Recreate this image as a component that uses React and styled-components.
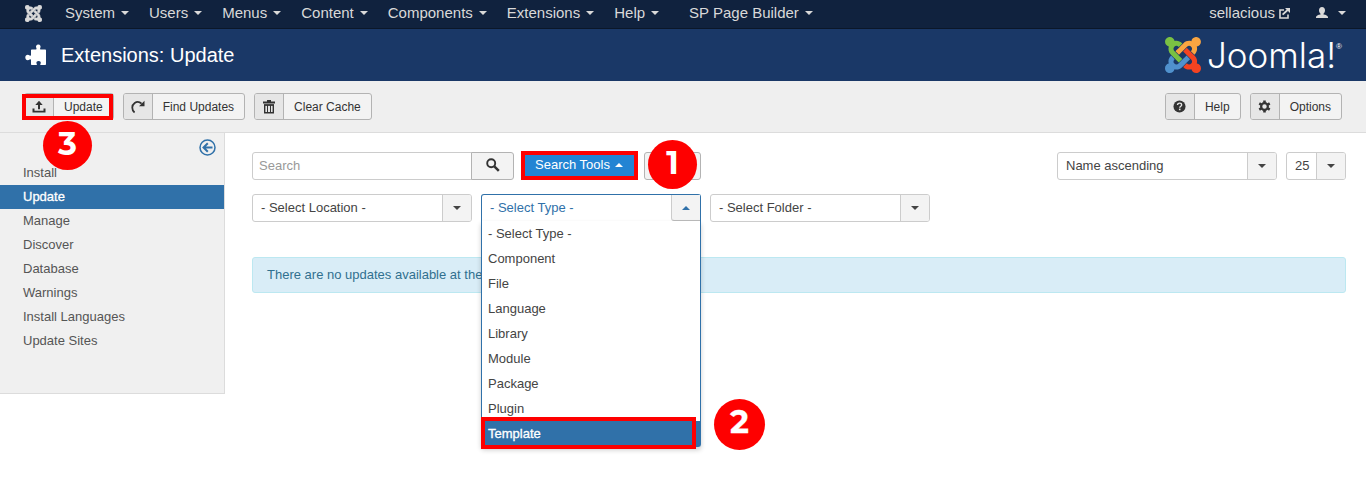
import React from "react";
import styled, { createGlobalStyle, css } from "styled-components";

const GlobalStyle = createGlobalStyle`
  *, *::before, *::after { box-sizing: border-box; }
  body {
    margin: 0;
    background: #fff;
    color: #333;
    font: 13px/18px "Liberation Sans", Arial, sans-serif;
  }
  button, input, select { font: inherit; color: inherit; margin: 0; }
  a { color: inherit; text-decoration: none; }
  ul { list-style: none; margin: 0; padding: 0; }
  svg { display: block; flex: none; }
`;

const Page = styled.div`
  min-height: 100vh;
`;

/* ---------- shared pieces ---------- */

const Caret = styled.span`
  width: 0;
  height: 0;
  flex: none;
  border: 4px solid transparent;
  ${(p) =>
    p.$up
      ? css`border-top-width: 0; border-bottom-color: currentColor;`
      : css`border-bottom-width: 0; border-top-color: currentColor;`}
`;

const Highlight = styled.span`
  position: absolute;
  inset: ${(p) => p.$inset || "0"};
  border: 4px solid #fe0000;
  pointer-events: none;
`;

const Step = styled.span`
  position: absolute;
  z-index: 5;
  top: ${(p) => p.$top}px;
  left: ${(p) => p.$left}px;
  width: ${(p) => p.$size}px;
  height: ${(p) => p.$size}px;
  border-radius: 50%;
  background: #fe0000;
  color: #fff;
  font: 700 32px/46px Montserrat, Inter, sans-serif;
  text-align: center;
  pointer-events: none;
`;

/* ---------- top navigation ---------- */

const NavBar = styled.nav`
  display: flex;
  align-items: center;
  justify-content: space-between;
  height: 29px;
  padding: 0 20px 2px 25px;
  background: #10223e;
  border-bottom: 1px solid #0b1729;
  color: #d9d9d9;
  font-size: 15px;
`;

const NavGroup = styled.div`
  display: flex;
  align-items: center;
  gap: ${(p) => p.$gap}px;
`;

const NavLink = styled.a`
  display: flex;
  align-items: center;
  gap: ${(p) => p.$gap || 6}px;
  white-space: nowrap;
  margin-left: ${(p) => (p.$apart ? 10 : 0)}px;
`;

/* ---------- title bar ---------- */

const Header = styled.header`
  display: flex;
  align-items: center;
  justify-content: space-between;
  height: 52px;
  padding: 0 24px 0 25px;
  background: #1a3867;
  color: #fff;
`;

const Title = styled.h1`
  display: flex;
  align-items: center;
  gap: 14px;
  margin: 0;
  font-size: 20px;
  font-weight: 400;
  line-height: 24px;
`;

const Brand = styled.a`
  display: flex;
  align-items: center;
  gap: 6px;
`;

const WordMark = styled.span`
  display: flex;
  font: 300 35px/36px Inter, sans-serif;
  sup { font: 400 8px/12px "Liberation Sans", sans-serif; margin-top: 4px; }
`;

/* ---------- toolbar ---------- */

const Toolbar = styled.div`
  display: flex;
  justify-content: space-between;
  padding: 12px 24px;
  background: #efefef;
  border-bottom: 1px solid #dcdcdc;
`;

const ToolGroup = styled.div`
  display: flex;
  gap: 9px;
`;

const ToolSlot = styled.div`
  position: relative;
`;

const ToolButton = styled.button`
  display: flex;
  align-items: stretch;
  height: 27px;
  padding: 0;
  border: 1px solid #b3b3b3;
  border-radius: 3px;
  background: #f3f3f3;
  color: #333;
  font-size: 12px;
  line-height: 26px;
  overflow: hidden;
`;

const ToolIcon = styled.span`
  display: flex;
  align-items: center;
  justify-content: center;
  width: 29px;
  background: #e6e6e6;
  border-right: 1px solid #b3b3b3;
`;

const ToolLabel = styled.span`
  padding: 0 10px;
`;

/* ---------- body ---------- */

const Body = styled.div`
  display: flex;
  align-items: flex-start;
`;

const Sidebar = styled.aside`
  flex: 0 0 225px;
  background: #f0f0f0;
  border: solid #dcdcdc;
  border-width: 0 1px 1px 0;
  padding-bottom: 40px;
`;

const CollapseRow = styled.div`
  display: flex;
  justify-content: flex-end;
  padding: 6px 8px 5px;
`;

const CollapseButton = styled.button`
  padding: 0;
  border: 0;
  background: none;
  color: #3071a9;
`;

const SideLink = styled.a`
  display: block;
  padding: 0 23px;
  line-height: 24px;
  color: ${(p) => (p.$active ? "#fff" : "#555")};
  background: ${(p) => (p.$active ? "#3071a9" : "transparent")};
  -webkit-text-stroke: ${(p) => (p.$active ? "0.3px" : "0")};
`;

const Main = styled.main`
  flex: 1;
  min-width: 0;
  padding: 19px 20px 0 27px;
`;

const FilterBar = styled.div`
  display: flex;
  justify-content: space-between;
  margin-bottom: 14px;
`;

const Row = styled.div`
  display: flex;
  gap: ${(p) => p.$gap}px;
`;

const SearchBox = styled.div`
  display: flex;
`;

const SearchInput = styled.input`
  width: 220px;
  height: 28px;
  padding: 0 6px 2px;
  border: 1px solid #ccc;
  border-radius: 3px 0 0 3px;
  background: #fff;
  outline: 0;
  &::placeholder { color: #999; opacity: 1; }
`;

const Button = styled.button`
  position: relative;
  display: flex;
  align-items: center;
  justify-content: center;
  gap: 5px;
  width: ${(p) => p.$width}px;
  height: 28px;
  padding: 0 0 2px;
  border: 1px solid #b3b3b3;
  border-radius: 3px;
  background: #f3f3f3;
  ${(p) =>
    p.$attached &&
    css`margin-left: -1px; border-radius: 0 3px 3px 0;`}
  ${(p) =>
    p.$primary &&
    css`background: #2384d3; border-color: #2384d3; color: #fff; border-radius: 0;`}
`;

const SelectBox = styled.div`
  position: relative;
  display: flex;
  width: ${(p) => p.$width}px;
  height: 28px;
  border: 1px solid ${(p) => (p.$open ? "#3071a9" : "#ccc")};
  border-radius: 3px;
  background: #fff;
  color: ${(p) => (p.$open ? "#3071a9" : "#444")};
  ${(p) => p.$open && css`border-bottom-color: #fff; border-radius: 3px 3px 0 0;`}
`;

const Select = styled.select`
  flex: 1;
  min-width: 0;
  padding: 0 0 0 8px;
  border: 0;
  outline: 0;
  background: transparent;
  appearance: none;
`;

const SelectArrow = styled.span`
  display: flex;
  align-items: center;
  justify-content: center;
  width: 29px;
  background: #f3f3f3;
  border-left: 1px solid #ccc;
  border-radius: 0 2px 2px 0;
  pointer-events: none;
  ${(p) => p.$open && css`border-bottom: 1px solid #bbb; border-radius: 0 0 0 3px;`}
`;

const Menu = styled.ul`
  position: absolute;
  z-index: 3;
  top: 26px;
  left: -1px;
  right: -1px;
  border: 1px solid #3071a9;
  border-top: 0;
  border-radius: 0 0 3px 3px;
  background: #fff;
  box-shadow: 0 3px 5px rgba(0, 0, 0, 0.2);
  color: #444;
`;

const Option = styled.li`
  position: relative;
  padding: 0 6px;
  line-height: 25px;
  ${(p) => p.$selected && css`background: #3071a9; color: #fff; -webkit-text-stroke: 0.3px;`}
`;

const Notice = styled.p`
  margin: 35px 0 0;
  padding: 8px 14px;
  border: 1px solid #bce8f1;
  border-radius: 3px;
  background: #d9edf7;
  color: #31708f;
`;

/* ---------- icons ---------- */

const JOOMLA_ARMS = [
  ["#7ac143", "M.6 92.1C.6 58.8 27.4 32 60.4 32c30 0 54.5 21.9 59.2 50.2 32.6-7.6 67.1.6 96.5 30l-44.3 44.3c-20.5-20.5-42.6-16.3-55.4-3.5-14.3 14.3-14.3 37.9 0 52.2l99.5 99.5-44 44.3c-87.7-87.2-49.7-49.7-99.8-99.7-26.8-26.5-35-64.8-24.8-98.9C20.4 144.6.6 120.7.6 92.1z"],
  ["#f9a541", "M130.1 208.5l44.3 44.3c10-10 89.7-89.7 99.7-99.8 14.3-14.3 37.6-14.3 51.9 0 12.8 12.8 17 35-3.5 55.4l44 44.3c31.2-31.2 38.5-67.6 28.9-101.2 29.2-4.1 51.9-29.2 51.9-59.5 0-33.2-26.8-60.1-59.8-60.1-30.3 0-55.4 22.5-59.5 51.6-33.8-9.9-71.7-1.5-98.3 25.1-18.3 19.1-71.1 71.5-99.6 99.9z"],
  ["#f44321", "M396.4 360.7c8.2-32.7-.9-68.5-26.3-93.9-11.8-12.2 5 4.7-99.5-99.7l-44.3 44.3 99.7 99.7c14.3 14.3 14.3 37.6 0 51.9-12.8 12.8-35 17-55.4-3.5l-44 44.3c27.6 30.2 68 38.8 102.7 28 5.5 27.4 29.7 48.1 58.9 48.1 33 0 59.8-26.8 59.8-60.1 0-30.2-22.5-55-51.6-59.1z"],
  ["#5091cd", "M312.1 307.6l-44-44.3c-87 86.4-50.4 50.4-99.7 99.8-14.3 14.3-37.6 14.3-51.9 0-13.1-13.4-16.9-35.3 3.2-55.4l-44-44.3c-30.2 30.2-38 65.2-29.5 98.3-26.7 6-46.2 29.9-46.2 58.2C0 453.2 26.8 480 59.8 480c28.6 0 52.5-19.8 58.6-46.7 32.7 8.2 68.5-.6 94.2-26 32.1-32 12.2-12.4 99.5-99.7z"],
];

const JoomlaMark = ({ size, color }) => (
  <svg width={size} height={size} viewBox="0 32 448 448" aria-hidden="true">
    {JOOMLA_ARMS.map(([fill, d]) => (
      <path key={fill} fill={color || fill} stroke={color} strokeWidth={color ? 14 : 0} d={d} />
    ))}
  </svg>
);

const PuzzleIcon = () => (
  <svg width="22" height="22" viewBox="0 0 22 22" fill="currentColor" aria-hidden="true">
    <path d="M7 5.500h4c.7 0 .7-.7.400-1.200C10.400 2.300 11.300.5 13.300.5s2.900 1.800 1.900 3.800c-.3.500-.3 1.200.4 1.200H20c.600 0 1 .400 1 1V20c0 .600-.400 1-1 1h-4.200c-.700 0-.600-.600-.300-1.100.9-1.700-.2-2.900-1.900-2.900s-2.800 1.200-1.900 2.900c.3.500.4 1.100-.3 1.100H7c-.600 0-1-.400-1-1v-4c0-.8-.8-.9-1.300-.5C2.500 17.100.3 15.800.3 13.500s2.200-3.600 4.400-2c.5.400 1.300.300 1.300-.5V6.500c0-.600.400-1 1-1z" />
  </svg>
);

const UploadIcon = () => (
  <svg width="14" height="14" viewBox="0 0 14 14" fill="currentColor" aria-hidden="true">
    <path d="M7 .8l3.700 4.200H8v4.300H6V5H3.300zM.5 8.500h2v2.200h9V8.500h2v4H.5z" />
  </svg>
);

const RedoIcon = () => (
  <svg width="14" height="14" viewBox="0 0 14 14" aria-hidden="true">
    <path d="M3.600 12.500C.4 9.900.6 5 3.700 2.900c2.300-1.500 5-1 6.900.8" fill="none" stroke="currentColor" strokeWidth="1.800" />
    <path d="M13.500.8v5.400H8z" fill="currentColor" />
  </svg>
);

const TrashIcon = () => (
  <svg width="14" height="14" viewBox="0 0 14 14" aria-hidden="true">
    <path d="M1 2.500h12M5 1h4" stroke="currentColor" strokeWidth="2" />
    <path d="M2.700 5v7.700h8.600V5z" fill="none" stroke="currentColor" strokeWidth="1.400" />
    <path d="M2 5h10M5.500 5v7M8.500 5v7" stroke="currentColor" strokeWidth="1" />
  </svg>
);

const HelpIcon = () => (
  <svg width="13" height="13" viewBox="0 0 14 14" aria-hidden="true">
    <circle cx="7" cy="7" r="6.500" fill="currentColor" />
    <path d="M4.900 5.400c0-1.400 1-2 2.200-2s2.200.700 2.200 1.900c0 1.500-2 1.500-2 3" fill="none" stroke="#e6e6e6" strokeWidth="1.500" />
    <rect x="6.400" y="9.300" width="1.700" height="1.700" fill="#e6e6e6" />
  </svg>
);

const CogIcon = () => (
  <svg width="13" height="13" viewBox="0 0 14 14" aria-hidden="true">
    <circle cx="7" cy="7" r="3.600" fill="none" stroke="currentColor" strokeWidth="2.400" />
    {[0, 60, 120].map((a) => (
      <path key={a} d="M5.600.5h2.800v2.400H5.600zM5.600 11.100h2.800v2.400H5.600z" fill="currentColor" transform={`rotate(${a} 7 7)`} />
    ))}
  </svg>
);

const SearchIcon = () => (
  <svg width="14" height="14" viewBox="0 0 14 14" fill="none" stroke="currentColor" aria-hidden="true">
    <circle cx="5.200" cy="5.200" r="4" strokeWidth="1.900" />
    <path d="M8.300 8.300l4.500 4.500" strokeWidth="2.500" />
  </svg>
);

const ExternalIcon = () => (
  <svg width="11" height="11" viewBox="0 0 11 11" aria-hidden="true">
    <path d="M5 2H1v8h8V6.500" fill="none" stroke="currentColor" strokeWidth="1.600" />
    <path d="M3.600 6.600L8.600 2" stroke="currentColor" strokeWidth="1.800" />
    <path d="M6 0h5v5z" fill="currentColor" />
  </svg>
);

const UserIcon = () => (
  <svg width="12" height="12" viewBox="0 0 12 12" fill="currentColor" aria-hidden="true">
    <path d="M6 0c1.900 0 3 1.300 3 3.200 0 1.500-.6 2.800-1.500 3.500v.9c2.500.3 4.500 1.200 4.500 2.600V11H0v-.8c0-1.400 2-2.300 4.500-2.600v-.9C3.600 6 3 4.700 3 3.200 3 1.300 4.100 0 6 0z" />
  </svg>
);

const BackIcon = () => (
  <svg width="17" height="17" viewBox="0 0 17 17" fill="none" stroke="currentColor" aria-hidden="true">
    <circle cx="8.500" cy="8.500" r="7.500" strokeWidth="1.500" />
    <path d="M13.500 8.500H5M8.800 4.200L4.500 8.500l4.300 4.300" strokeWidth="2" />
  </svg>
);

/* ---------- data ---------- */

const NAV = ["System", "Users", "Menus", "Content", "Components", "Extensions", "Help", "SP Page Builder"];
const SIDE = ["Install", "Update", "Manage", "Discover", "Database", "Warnings", "Install Languages", "Update Sites"];
const TYPES = ["- Select Type -", "Component", "File", "Language", "Library", "Module", "Package", "Plugin", "Template"];

/* ---------- composed controls ---------- */

function Tool({ icon, label, children }) {
  return (
    <ToolSlot>
      <ToolButton type="button">
        <ToolIcon>{icon}</ToolIcon>
        <ToolLabel>{label}</ToolLabel>
      </ToolButton>
      {children}
    </ToolSlot>
  );
}

function Dropdown({ label, value, width = 220, open = false, children }) {
  return (
    <SelectBox $width={width} $open={open}>
      <Select aria-label={label} defaultValue={value}>
        <option>{value}</option>
      </Select>
      <SelectArrow $open={open}>
        <Caret $up={open} />
      </SelectArrow>
      {children}
    </SelectBox>
  );
}

export default function App() {
  return (
    <Page>
      <GlobalStyle />
      <NavBar>
        <NavGroup $gap={23}>
          <NavLink href="#" aria-label="Control panel">
            <JoomlaMark size={17} color="#d9d9d9" />
          </NavLink>
          <NavGroup $gap={20}>
            {NAV.map((name) => (
              <NavLink href="#" key={name} $apart={name === "SP Page Builder"}>
                {name} <Caret />
              </NavLink>
            ))}
          </NavGroup>
        </NavGroup>
        <NavGroup $gap={26}>
          <NavLink href="#" $gap={4}>
            sellacious <ExternalIcon />
          </NavLink>
          <NavLink href="#" $gap={10} aria-label="User menu">
            <UserIcon /> <Caret />
          </NavLink>
        </NavGroup>
      </NavBar>

      <Header>
        <Title>
          <PuzzleIcon />
          Extensions: Update
        </Title>
        <Brand href="#">
          <JoomlaMark size={36} />
          <WordMark>
            Joomla!<sup>®</sup>
          </WordMark>
        </Brand>
      </Header>

      <Toolbar>
        <ToolGroup>
          <Tool icon={<UploadIcon />} label="Update">
            <Highlight $inset="1px 1px 0 -2px" />
            <Step $top={28} $left={19} $size={49}>3</Step>
          </Tool>
          <Tool icon={<RedoIcon />} label="Find Updates" />
          <Tool icon={<TrashIcon />} label="Clear Cache" />
        </ToolGroup>
        <ToolGroup>
          <Tool icon={<HelpIcon />} label="Help" />
          <Tool icon={<CogIcon />} label="Options" />
        </ToolGroup>
      </Toolbar>

      <Body>
        <Sidebar>
          <CollapseRow>
            <CollapseButton type="button" aria-label="Hide sidebar">
              <BackIcon />
            </CollapseButton>
          </CollapseRow>
          <ul>
            {SIDE.map((name) => (
              <li key={name}>
                <SideLink href="#" $active={name === "Update"}>{name}</SideLink>
              </li>
            ))}
          </ul>
        </Sidebar>

        <Main>
          <FilterBar>
            <Row $gap={7}>
              <SearchBox>
                <SearchInput type="text" placeholder="Search" aria-label="Search" />
                <Button type="button" $width={43} $attached aria-label="Submit search">
                  <SearchIcon />
                </Button>
              </SearchBox>
              <Button type="button" $width={116} $primary>
                Search Tools <Caret $up />
                <Highlight $inset="-2px -2px -1px -1px" />
              </Button>
              <Button type="button" $width={57} aria-label="Clear">
                <Step $top={-13} $left={3} $size={49}>1</Step>
              </Button>
            </Row>
            <Row $gap={9}>
              <Dropdown label="Sort by" value="Name ascending" />
              <Dropdown label="Items per page" value="25" width={60} />
            </Row>
          </FilterBar>

          <Row $gap={9}>
            <Dropdown label="Location" value="- Select Location -" />
            <Dropdown label="Type" value="- Select Type -" open>
              <Menu role="listbox" aria-label="Type options">
                {TYPES.map((name) => {
                  const selected = name === "Template";
                  return (
                    <Option key={name} role="option" aria-selected={selected} $selected={selected}>
                      {name}
                      {selected && (
                        <>
                          <Highlight $inset="-4px 4px -3px -1px" />
                          <Step $top={-22} $left={232} $size={51}>2</Step>
                        </>
                      )}
                    </Option>
                  );
                })}
              </Menu>
            </Dropdown>
            <Dropdown label="Folder" value="- Select Folder -" />
          </Row>

          <Notice>There are no updates available at the moment.</Notice>
        </Main>
      </Body>
    </Page>
  );
}
